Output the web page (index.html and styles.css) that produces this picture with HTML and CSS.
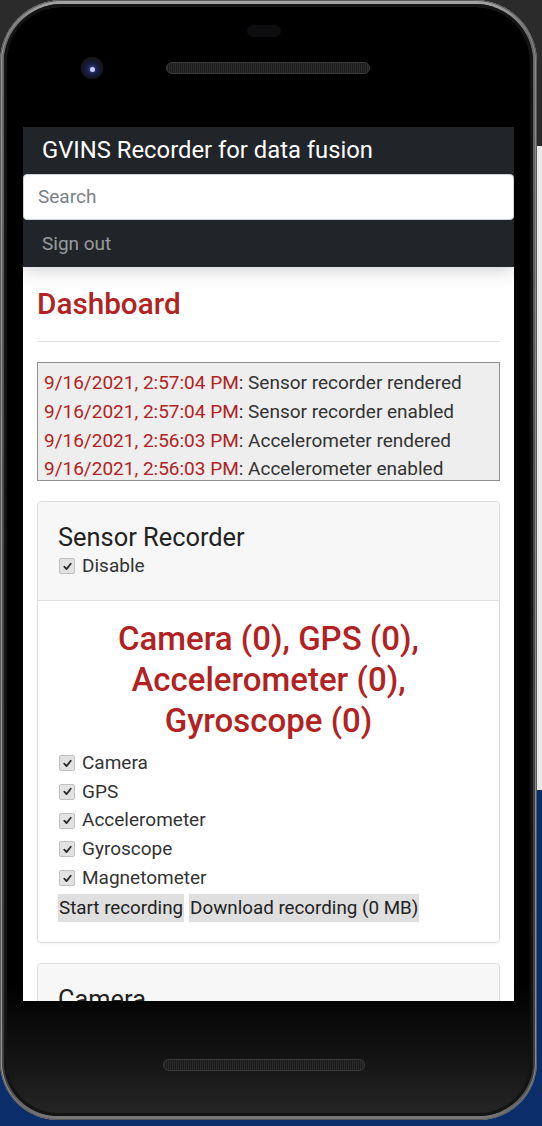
FILE: index.html
```html
<!DOCTYPE html>
<html lang="en">
<head>
<meta charset="utf-8">
<title>GVINS Recorder</title>
<link rel="stylesheet" href="styles.css">
</head>
<body>
<div class="phone">
  <div class="bezel">
    <div class="top-bezel">
      <div class="sensor-pill"></div>
      <div class="hw-row">
        <div class="camera"><div class="lens"></div></div>
        <div class="speaker"></div>
      </div>
    </div>
    <div class="screen">
      <nav class="navbar">
        <div class="brand">GVINS Recorder for data fusion</div>
        <div class="search"><span class="placeholder">Search</span></div>
        <div class="signout">Sign out</div>
      </nav>
      <main class="content">
        <h1 class="title">Dashboard</h1>
        <hr class="rule">
        <div class="log">
          <div class="log-line"><span class="ts">9/16/2021, 2:57:04 PM</span>: Sensor recorder rendered</div>
          <div class="log-line"><span class="ts">9/16/2021, 2:57:04 PM</span>: Sensor recorder enabled</div>
          <div class="log-line"><span class="ts">9/16/2021, 2:56:03 PM</span>: Accelerometer rendered</div>
          <div class="log-line"><span class="ts">9/16/2021, 2:56:03 PM</span>: Accelerometer enabled</div>
        </div>
        <section class="card">
          <div class="card-header">
            <div class="card-title">Sensor Recorder</div>
            <label class="check"><span class="box"><svg viewBox="0 0 16 16" width="16" height="16"><path d="M4 8.3 L6.8 11.2 L12 4.6" fill="none" stroke="#2a2a2a" stroke-width="2.2" stroke-linecap="round" stroke-linejoin="round"/></svg></span>Disable</label>
          </div>
          <div class="card-body">
            <h2 class="counts">Camera (0), GPS (0), Accelerometer (0), Gyroscope (0)</h2>
            <label class="check"><span class="box"><svg viewBox="0 0 16 16" width="16" height="16"><path d="M4 8.3 L6.8 11.2 L12 4.6" fill="none" stroke="#2a2a2a" stroke-width="2.2" stroke-linecap="round" stroke-linejoin="round"/></svg></span>Camera</label>
            <label class="check"><span class="box"><svg viewBox="0 0 16 16" width="16" height="16"><path d="M4 8.3 L6.8 11.2 L12 4.6" fill="none" stroke="#2a2a2a" stroke-width="2.2" stroke-linecap="round" stroke-linejoin="round"/></svg></span>GPS</label>
            <label class="check"><span class="box"><svg viewBox="0 0 16 16" width="16" height="16"><path d="M4 8.3 L6.8 11.2 L12 4.6" fill="none" stroke="#2a2a2a" stroke-width="2.2" stroke-linecap="round" stroke-linejoin="round"/></svg></span>Accelerometer</label>
            <label class="check"><span class="box"><svg viewBox="0 0 16 16" width="16" height="16"><path d="M4 8.3 L6.8 11.2 L12 4.6" fill="none" stroke="#2a2a2a" stroke-width="2.2" stroke-linecap="round" stroke-linejoin="round"/></svg></span>Gyroscope</label>
            <label class="check"><span class="box"><svg viewBox="0 0 16 16" width="16" height="16"><path d="M4 8.3 L6.8 11.2 L12 4.6" fill="none" stroke="#2a2a2a" stroke-width="2.2" stroke-linecap="round" stroke-linejoin="round"/></svg></span>Magnetometer</label>
            <div class="buttons">
              <button class="btn">Start recording</button>
              <button class="btn">Download recording (0 MB)</button>
            </div>
          </div>
        </section>
        <section class="card">
          <div class="card-header">
            <div class="card-title">Camera</div>
          </div>
        </section>
      </main>
    </div>
    <div class="bottom-bezel">
      <div class="speaker bottom"></div>
    </div>
  </div>
</div>
</body>
</html>
```
FILE: styles.css
```css
* { box-sizing: border-box; }
html, body { margin: 0; padding: 0; }
body {
  width: 542px;
  height: 1126px;
  overflow: hidden;
  font-family: Roboto, "Liberation Sans", sans-serif;
  background: linear-gradient(to bottom, #2b2b2b 0, #2b2b2b 146px, #e9e9e9 146px, #e9e9e9 790px, #0b2d6a 790px, #0b2d6a 100%);
}
.phone {
  width: 537px;
  height: 1120px;
  border-radius: 62px 62px 58px 58px;
  background: linear-gradient(to bottom, #a8a8a8, #6a6a6a 3%, #4a4a4a 50%, #3c3c3c 96%, #7a7a7a);
  padding: 4px;
  box-shadow: inset 0 0 0 1px #5a5a5a, inset 2px 0 0 0 #9a9a9a, inset -2px 0 0 0 #8a8a8a;
}
.bezel {
  height: 100%;
  border-radius: 58px 58px 54px 54px;
  background: linear-gradient(to bottom, #000 0, #000 88%, #141414 95%, #262626 100%);
  box-shadow: inset 0 0 0 3px #141414, inset 0 9px 0 -6px #444;
  display: flex;
  flex-direction: column;
  padding: 0 19px;
}
.top-bezel {
  height: 123px;
  flex: none;
  display: flex;
  flex-direction: column;
}
.sensor-pill {
  align-self: center;
  margin-top: 21px;
  width: 34px;
  height: 12px;
  border-radius: 6px;
  background: #0d0d10;
  margin-left: -10px;
}
.hw-row {
  display: flex;
  align-items: center;
  margin-top: 20px;
  height: 22px;
}
.camera {
  width: 22px;
  height: 22px;
  border-radius: 50%;
  background: radial-gradient(circle at 50% 55%, #3c4a9a 0, #1a2050 30%, #141622 55%, #1d1d22 100%);
  margin-left: 58px;
  display: flex;
  align-items: center;
  justify-content: center;
}
.lens {
  width: 5px;
  height: 5px;
  border-radius: 50%;
  background: #c8d0ff;
  margin-top: 3px;
}
.speaker {
  width: 204px;
  height: 12px;
  border-radius: 6px;
  background: repeating-linear-gradient(to right, #2c2c2c 0, #2c2c2c 1px, #1a1a1a 1px, #1a1a1a 2px);
  border: 1px solid #3a3a3a;
  margin-left: 63px;
}
.screen {
  height: 874px;
  flex: none;
  background: #fff;
  overflow: hidden;
}
.bottom-bezel {
  flex: 1;
  display: flex;
  justify-content: center;
  padding-top: 58px;
}
.speaker.bottom {
  margin-left: -10px;
  width: 202px;
}

/* navbar */
.navbar {
  background: #212529;
  box-shadow: 0 6px 14px rgba(0,0,0,0.14);
  position: relative;
}
.brand {
  color: #fff;
  font-size: 23.8px;
  line-height: 47px;
  padding-left: 19px;
}
.search {
  height: 46px;
  background: #fff;
  border-radius: 4px;
  border: 1px solid #ced4da;
  display: flex;
  align-items: center;
  padding-left: 14px;
  padding-bottom: 2px;
}
.placeholder {
  color: #7a8188;
  font-size: 19px;
}
.signout {
  color: rgba(255,255,255,0.55);
  font-size: 19px;
  line-height: 47px;
  padding-left: 19px;
}

/* content */
.content {
  padding: 0 14px 0 14px;
}
.title {
  margin: 0;
  padding-top: 20px;
  color: #b22222;
  font-size: 29.7px;
  font-weight: 500;
  line-height: 34px;
}
.rule {
  border: 0;
  border-top: 1px solid #e3e3e3;
  margin: 20px 0 20px;
}
.log {
  height: 119px;
  overflow: hidden;
  background: #eee;
  border: 1px solid #8f8f8f;
  padding: 6px 6px 5px;
  font-size: 19px;
  line-height: 28.8px;
  color: #333;
}
.ts { color: #b22222; }
.card {
  margin-top: 20px;
  border: 1px solid #dedede;
  border-radius: 4px;
  box-shadow: 0 1px 2px rgba(0,0,0,0.05);
}
.card-header {
  background: #f7f7f7;
  border-bottom: 1px solid #dedede;
  padding: 20px 20px 19px;
  border-radius: 4px 4px 0 0;
}
.card-title {
  font-size: 25.4px;
  line-height: 30px;
  color: #222;
}
.check {
  display: flex;
  align-items: center;
  font-size: 19px;
  line-height: 28.75px;
  color: #333;
}
.box {
  width: 16px;
  height: 16px;
  border: 1px solid #c0c0c0;
  border-radius: 2px;
  background: #e2e2e2;
  display: flex;
  align-items: center;
  justify-content: center;
  margin-left: 1px;
  margin-right: 7px;
}
.box svg { width: 13px; height: 13px; }
.card-body {
  padding: 17px 20px 20px;
}
.counts {
  margin: 0 0 8px;
  text-align: center;
  color: #b22222;
  font-size: 33px;
  font-weight: 500;
  line-height: 41px;
}
.buttons {
  display: flex;
  gap: 5px;
  margin-top: 1px;
}
.btn {
  font-family: Roboto, "Liberation Sans", sans-serif;
  font-size: 18.8px;
  line-height: 28px;
  color: #222;
  background: #dfdfdf;
  border: 0;
  padding: 0 1px;
  margin: 0;
  border-radius: 0;
}
```
